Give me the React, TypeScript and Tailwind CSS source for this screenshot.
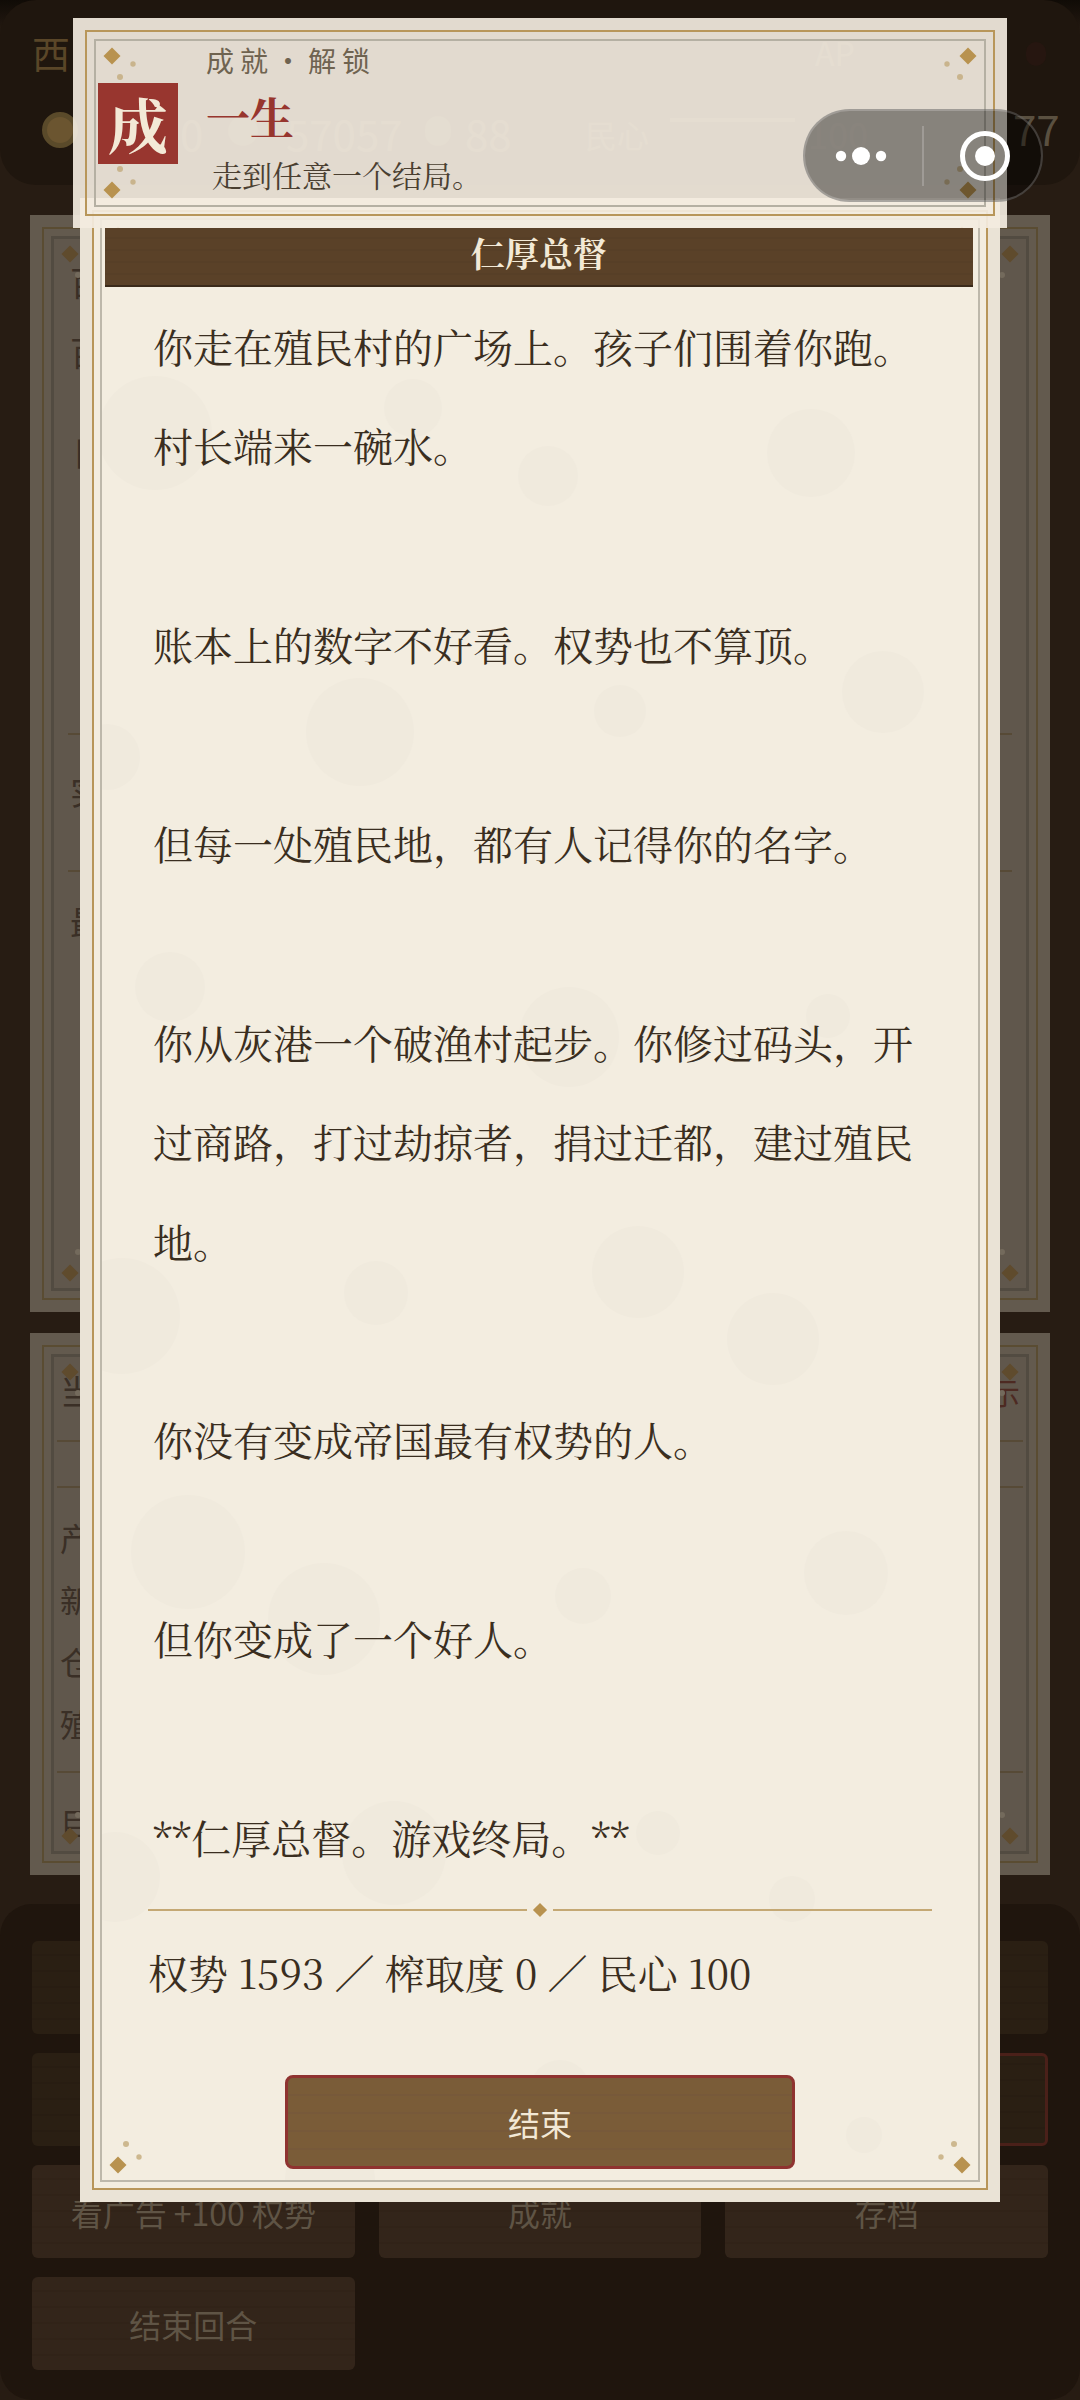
const serif = "font-['Noto_Serif_CJK_SC','Liberation_Serif','Noto_Sans_CJK_SC',serif]";
const sans = "font-['Noto_Sans_CJK_SC','Noto_Sans',sans-serif]";

const story = `你走在殖民村的广场上。孩子们围着你跑。
村长端来一碗水。

账本上的数字不好看。权势也不算顶。

但每一处殖民地，都有人记得你的名字。

你从灰港一个破渔村起步。你修过码头，开过商路，打过劫掠者，捐过迁都，建过殖民地。

你没有变成帝国最有权势的人。

但你变成了一个好人。

**仁厚总督。游戏终局。**`;

// page coordinates, the svg viewBox below starts at the modal's corner
const blobs = [
  [155, 433, 57], [413, 408, 29], [548, 476, 30], [811, 453, 44], [360, 732, 54], [620, 711, 26],
  [883, 692, 41], [107, 757, 33], [170, 987, 35], [569, 1037, 50], [828, 1016, 22], [122, 1316, 58],
  [376, 1293, 32], [638, 1272, 46], [773, 1339, 46], [188, 1552, 57], [324, 1619, 56], [583, 1596, 28],
  [846, 1573, 42], [115, 1877, 45], [394, 1853, 52], [658, 1833, 22], [792, 1899, 23], [864, 2135, 18],
  [330, 2180, 45], [560, 2090, 30],
];

function Ornament({ className, diamond, dot }: { className: string; diamond: string; dot: string }) {
  return (
    <svg className={`absolute ${className}`} width="48" height="48" viewBox="0 0 48 48">
      <path d="M18 22.5 L26.5 31 L18 39.5 L9.500 31 Z" fill={diamond} />
      <circle cx="26" cy="10" r="3" fill={dot} />
      <circle cx="39" cy="23" r="2.700" fill={dot} />
    </svg>
  );
}

function Corners({ diamond, dot }: { diamond: string; dot: string }) {
  return (
    <>
      <Ornament className="-left-[2px] -bottom-[2px]" diamond={diamond} dot={dot} />
      <Ornament className="-right-[2px] -bottom-[2px] -scale-x-100" diamond={diamond} dot={dot} />
      <Ornament className="-left-[2px] -top-[2px] -scale-y-100" diamond={diamond} dot={dot} />
      <Ornament className="-right-[2px] -top-[2px] -scale-100" diamond={diamond} dot={dot} />
    </>
  );
}

function Panel({ className, children }: { className: string; children: React.ReactNode }) {
  return (
    <section className={`mx-[30px] bg-[#635a4e] p-[12px] ${className}`}>
      <div className="h-full border-2 border-[#5a4c32] p-[7px]">
        <div className="relative h-full border-[3px] border-[#524b41] bg-[#60574c]">
          <Corners diamond="#5f4b2d" dot="#736a5c" />
          {children}
        </div>
      </div>
    </section>
  );
}

function Fragment({ className = "", children }: { className?: string; children: string }) {
  return <div className={`text-[#3a2f26] ${sans} ${className}`}>{children}</div>;
}

function GameButton({ label, dim, danger }: { label?: string; dim?: boolean; danger?: boolean }) {
  const tone = dim
    ? "bg-[repeating-linear-gradient(0deg,#2a1f13_0px,#2a1f13_14px,#281d12_14px,#281d12_16px)]"
    : "bg-[repeating-linear-gradient(0deg,#33251a_0px,#33251a_14px,#312318_14px,#312318_16px)]";
  return (
    <div
      className={`flex h-[93px] items-center justify-center rounded-[6px] text-[32px] text-[#5f5445] ${tone} ${
        danger ? "border-[3px] border-[#4a2019]" : ""
      }`}
    >
      {label}
    </div>
  );
}

function TopBar() {
  return (
    <header className={`relative flex h-[185px] rounded-[36px] bg-[#1f160e] ${sans}`}>
      <div className="ml-[32px] mt-[27px] text-[38px] leading-[50px] text-[#5a4628]">西</div>
      <div className="absolute left-[42px] top-[112px] h-[36px] w-[36px] rounded-full border-[5px] border-[#5a4a2a] bg-[#6b5530]" />
      <div className="absolute left-[180px] top-[108px] text-[42px] leading-[50px] text-[#443c30]">0</div>
      <div className="absolute left-[228px] top-[116px] h-[30px] w-[30px] rounded-full bg-[#3a3226]" />
      <div className="absolute left-[286px] top-[108px] text-[42px] leading-[50px] text-[#443c30]">57057</div>
      <div className="absolute left-[425px] top-[116px] h-[30px] w-[26px] rounded-full bg-[#3a3226]" />
      <div className="absolute left-[465px] top-[108px] text-[42px] leading-[50px] text-[#443c30]">88</div>
      <div className="absolute left-[585px] top-[112px] text-[32px] leading-[44px] text-[#443c30]">民心</div>
      <div className="absolute left-[670px] top-[118px] h-[4px] w-[125px] bg-[#3d3226]" />
      <div className="absolute left-[808px] top-[108px] text-[36px] leading-[50px] text-[#443c30]">100</div>
      <div className="absolute left-[815px] top-[32px] text-[32px] leading-[40px] text-[#443c30]">AP</div>
      <div className="absolute left-[1013px] top-[103px] text-[42px] leading-[50px] text-[#5a5040]">77</div>
      <div className="absolute left-[1026px] top-[42px] h-[24px] w-[20px] rounded-full bg-[#261610]" />
    </header>
  );
}

function Backdrop() {
  return (
    <div className="flex min-h-[2400px] flex-col bg-[linear-gradient(180deg,#100b06_0px,#271c13_36px)]">
      <TopBar />
      <Panel className="mt-[30px] h-[1097px]">
        <div className="flex flex-col px-[14px] pt-[23px]">
          <Fragment className="pl-[2px] text-[34px] leading-[40px]">百</Fragment>
          <Fragment className="mt-[30px] pl-[2px] text-[34px] leading-[40px]">百</Fragment>
          <Fragment className="mt-[60px] pl-[4px] text-[34px] leading-[40px]">日</Fragment>
          <div className="mt-[261px] h-[2px] bg-[#574a36]" />
          <Fragment className="mt-[36px] pl-[2px] text-[34px] leading-[40px]">实</Fragment>
          <div className="mt-[59px] h-[2px] bg-[#574a36]" />
          <Fragment className="mt-[30px] pl-[2px] text-[34px] leading-[40px]">最</Fragment>
        </div>
      </Panel>
      <Panel className="mt-[21px] h-[542px]">
        <div className="flex flex-col px-[6px] pt-[14px]">
          <div className="flex items-center justify-between text-[34px] leading-[40px]">
            <Fragment>当</Fragment>
            <Fragment className="text-[30px] text-[#4d2a22]">示</Fragment>
          </div>
          <div className="mx-[-3px] mt-[29px] h-[2px] bg-[#574a36]" />
          <div className="mx-[-3px] mt-[44px] h-[2px] bg-[#574a36]" />
          <div className="mt-[18px] flex flex-col text-[32px] leading-[62px]">
            <Fragment>产</Fragment>
            <Fragment>新</Fragment>
            <Fragment>仓</Fragment>
            <Fragment>殖</Fragment>
          </div>
          <div className="mx-[-3px] mt-[17px] h-[2px] bg-[#574a36]" />
          <Fragment className="mt-[29px] text-[32px] leading-[40px]">目</Fragment>
        </div>
      </Panel>
      <footer className={`mt-[29px] flex-1 rounded-[32px] bg-[#1f150d] px-[32px] pt-[37px] ${sans}`}>
        <div className="grid grid-cols-3 gap-x-[24px] gap-y-[19px]">
          <GameButton dim />
          <GameButton dim />
          <GameButton dim />
          <GameButton dim />
          <GameButton dim />
          <GameButton dim danger />
          <GameButton label="看广告 +100 权势" />
          <GameButton label="成就" />
          <GameButton label="存档" />
          <GameButton label="结束回合" />
        </div>
      </footer>
    </div>
  );
}

function EndingModal() {
  return (
    <div className="absolute left-[80px] top-[198px] h-[2004px] w-[920px] overflow-hidden bg-[#eae3d6] p-[12px]">
      <div className="h-full border-2 border-[#b8965a] bg-[#f3ede0] p-[6px]">
        <div className="relative flex h-full flex-col border-2 border-[#bdb8ab] bg-[#f3ede0]">
          <div className="absolute inset-0 overflow-hidden">
            <svg className="absolute left-[-22px] top-[-22px]" width="920" height="2004" viewBox="80 198 920 2004">
              {blobs.map(([cx, cy, r]) => (
                <circle key={`${cx}-${cy}`} cx={cx} cy={cy} r={r} fill="#f0eadd" />
              ))}
            </svg>
          </div>
          <Corners diamond="#b8924f" dot="#cdb88f" />
          <h2
            className={`relative ml-[3px] mr-[5px] mt-[8px] h-[59px] border-b-2 border-[#3a2a1a] bg-[repeating-linear-gradient(0deg,#5a4128_0px,#5a4128_10px,#573f27_10px,#573f27_12px)] text-center text-[34px] font-bold leading-[50px] text-[#f3e9d6] ${serif}`}
          >
            仁厚总督
          </h2>
          <p
            className={`relative ml-[51px] mt-[9px] w-[768px] whitespace-pre-wrap text-[40px] leading-[99.4px] text-[#3a2e20] ${serif}`}
          >
            {story}
          </p>
          <div className="relative mt-[18px] flex w-[784px] items-center self-center">
            <div className="h-[2px] flex-1 bg-[#c4a874]" />
            <div className="mx-[8px] h-[10px] w-[10px] rotate-45 bg-[#b8924f]" />
            <div className="h-[2px] flex-1 bg-[#c4a874]" />
          </div>
          <p className={`relative ml-[46px] mt-[27px] text-[40px] leading-[60px] text-[#3a2e20] ${serif}`}>
            权势 1593 ／ 榨取度 0 ／ 民心 100
          </p>
          <button
            className={`relative mt-[73px] h-[94px] w-[510px] self-center rounded-[8px] border-[3px] border-[#8f3330] bg-[repeating-linear-gradient(0deg,#7a5c38_0px,#7a5c38_16px,#77593a_16px,#77593a_18px)] text-[32px] text-[#f2e8d5] ${sans}`}
          >
            结束
          </button>
        </div>
      </div>
    </div>
  );
}

function AchievementToast() {
  return (
    <div className="absolute left-[73px] top-[18px] h-[210px] w-[934px] bg-[#f3ece0]/92 p-[12px]">
      <div className="h-full border-2 border-[#b8965a] p-[7px]">
        <div className="relative flex h-full items-center border-2 border-[#b5b0a3] pl-[2px]">
          <Corners diamond="#b8924f" dot="#c9b48d" />
          <div className={`relative flex h-[81px] w-[80px] items-center justify-center bg-[#98362f] text-[60px] font-bold leading-[76px] text-[#f3e9d6] ${serif}`}>
            成
          </div>
          <div className="relative ml-[28px] mt-[1px] flex flex-col self-start">
            <div className={`text-[28px] leading-[36px] tracking-[6px] text-[#6f6350] ${sans}`}>成就·解锁</div>
            <div className={`mt-[11px] text-[44px] font-bold leading-[54px] text-[#97352e] ${serif}`}>一生</div>
            <div className={`ml-[6px] mt-[13px] text-[30px] leading-[36px] text-[#4a3f31] ${serif}`}>走到任意一个结局。</div>
          </div>
        </div>
      </div>
    </div>
  );
}

function MiniProgramCapsule() {
  return (
    <div className="absolute left-[803px] top-[109px] flex h-[93px] w-[240px] items-center rounded-full border-2 border-white/20 bg-black/40">
      <svg className="ml-[26px]" width="60" height="24" viewBox="0 0 60 24">
        <circle cx="10" cy="12" r="5.200" fill="#fff" />
        <circle cx="30" cy="12" r="9" fill="#fff" />
        <circle cx="50" cy="12" r="5.200" fill="#fff" />
      </svg>
      <div className="ml-[31px] h-[60px] w-[2px] bg-white/20" />
      <svg className="ml-[35px]" width="52" height="52" viewBox="0 0 52 52">
        <circle cx="26" cy="26" r="22.500" fill="none" stroke="#fff" strokeWidth="5" />
        <circle cx="26" cy="26" r="10" fill="#fff" />
      </svg>
    </div>
  );
}

export default function App() {
  return (
    <div className="relative h-[2400px] w-[1080px] overflow-hidden">
      <Backdrop />
      <EndingModal />
      <AchievementToast />
      <MiniProgramCapsule />
    </div>
  );
}
